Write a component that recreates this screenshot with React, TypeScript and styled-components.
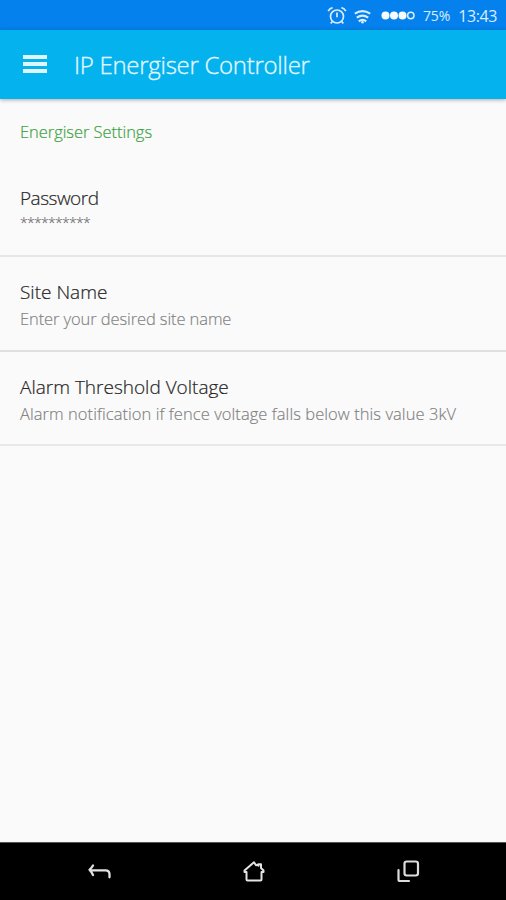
import React from 'react';
import styled, { createGlobalStyle } from 'styled-components';

const GlobalStyle = createGlobalStyle`
  * { box-sizing: border-box; }
  body { margin: 0; background: #fafafa; }
`;

const Screen = styled.div`
  width: 100%;
  height: 900px;
  display: flex;
  flex-direction: column;
  overflow: hidden;
  background: #fafafa;
  font-family: 'Open Sans', 'Noto Sans', sans-serif;
  font-weight: 300;
`;

const StatusBar = styled.header`
  height: 30px;
  flex: none;
  display: flex;
  align-items: center;
  justify-content: flex-end;
  padding: 1px 9px 0 0;
  background: #0481ec;
  color: #d9edff;
`;

const StatusIcon = styled.svg<{ $gap: number }>`
  display: block;
  flex: none;
  margin-right: ${(p) => p.$gap}px;
`;

const StatusText = styled.span<{ $size: number; $spacing: number; $gap?: number }>`
  font-size: ${(p) => p.$size}px;
  line-height: 28px;
  font-weight: 400;
  letter-spacing: ${(p) => p.$spacing}px;
  margin-right: ${(p) => p.$gap ?? 0}px;
  white-space: nowrap;
`;

const AppBar = styled.div`
  height: 69px;
  flex: none;
  display: flex;
  align-items: center;
  padding-left: 23px;
  background: #04b2ee;
  box-shadow: 0 1px 4px rgba(0, 0, 0, 0.32);
`;

const MenuButton = styled.button`
  width: 24px;
  height: 18px;
  margin-top: -1px;
  padding: 0;
  border: 0;
  background: none;
  display: flex;
  flex-direction: column;
  justify-content: space-between;
`;

const MenuLine = styled.span`
  display: block;
  width: 24px;
  height: 4px;
  background: #dff6ff;
`;

const AppTitle = styled.h1`
  margin: 0 0 0 27px;
  font-size: 24px;
  line-height: 34px;
  font-weight: 300;
  letter-spacing: -0.28px;
  color: #e6f8ff;
  -webkit-text-stroke: 0.3px currentColor;
  white-space: nowrap;
`;

const Settings = styled.main`
  flex: 1;
  display: flex;
  flex-direction: column;
`;

const SectionTitle = styled.h2`
  margin: 0;
  height: 64px;
  padding: 21px 0 0 20px;
  font-size: 16.5px;
  line-height: 24px;
  font-weight: 300;
  letter-spacing: -0.05px;
  color: #3ea244;
  -webkit-text-stroke: 0.2px currentColor;
`;

const Item = styled.section<{ $height: number; $rule: string }>`
  height: ${(p) => p.$height}px;
  padding: 21px 0 0 20px;
  border-bottom: 2px solid ${(p) => p.$rule};
  white-space: nowrap;
`;

const ItemTitle = styled.div<{ $spacing: number }>`
  font-size: 19px;
  line-height: 28px;
  letter-spacing: ${(p) => p.$spacing}px;
  color: #262626;
  -webkit-text-stroke: 0.2px currentColor;
`;

const ItemSummary = styled.div<{ $spacing: number }>`
  font-size: 16.5px;
  line-height: 25px;
  letter-spacing: ${(p) => p.$spacing}px;
  color: #808080;
  -webkit-text-stroke: 0.15px currentColor;
`;

const MaskedSummary = styled(ItemSummary)`
  font-size: 14px;
  line-height: 22px;
  color: #6a6a6a;
`;

const NavBar = styled.nav`
  height: 58px;
  flex: none;
  display: grid;
  grid-template-columns: 154px 154px 154px;
  justify-content: center;
  align-items: center;
  padding: 0 0 2px 2px;
  border-top: 1px solid #555;
  background: #000;
`;

const NavButton = styled.button`
  display: flex;
  justify-content: center;
  padding: 0;
  border: 0;
  background: none;
`;

const items = [
  { title: 'Password', summary: '**********', masked: true, height: 94, ts: -0.5, ss: -0.7, rule: '#e6e6e6' },
  { title: 'Site Name', summary: 'Enter your desired site name', masked: false, height: 95, ts: 0, ss: -0.1, rule: '#dfdfdf' },
  {
    title: 'Alarm Threshold Voltage',
    summary: 'Alarm notification if fence voltage falls below this value 3kV',
    masked: false, height: 94, ts: 0, ss: 0.06, rule: '#e8e8e8',
  },
];

export default function App() {
  return (
    <Screen>
      <GlobalStyle />
      <StatusBar>
        <StatusIcon $gap={7} width="20" height="20" viewBox="0 0 20 20" fill="none" stroke="currentColor" strokeWidth="1.7">
          <circle cx="10" cy="10.500" r="6.500" />
          <path d="M10 6.500v4.800M1.200 5.200Q2.500 2.300 5.600 1.600M18.800 5.200Q17.500 2.300 14.400 1.600M5.300 15.500l-1.600 2M14.700 15.500l1.600 2" />
        </StatusIcon>
        <StatusIcon $gap={10} width="17" height="16" viewBox="0 0 17 16" fill="none" stroke="currentColor" strokeWidth="2.2">
          <path d="M.8 5.600Q8.500 .8 16.200 5.600M2.800 9.600Q8.500 5.600 14.200 9.600M4.800 13.400Q8.500 10.300 12.200 13.400" />
          <circle cx="8.500" cy="14.200" r="1.300" fill="currentColor" stroke="none" />
        </StatusIcon>
        <StatusIcon $gap={8} width="34" height="10" viewBox="0 0 34 10" fill="#f5fbff">
          <circle cx="4.500" cy="4.500" r="4" />
          <circle cx="13" cy="4.500" r="4" />
          <circle cx="21.500" cy="4.500" r="4" />
          <circle cx="29.800" cy="4.500" r="3.200" fill="none" stroke="#d9edff" strokeWidth="1.500" />
        </StatusIcon>
        <StatusText $size={14} $spacing={-0.1} $gap={8}>75%</StatusText>
        <StatusText $size={16} $spacing={-0.4}>13:43</StatusText>
      </StatusBar>
      <AppBar>
        <MenuButton aria-label="Menu">
          <MenuLine />
          <MenuLine />
          <MenuLine />
        </MenuButton>
        <AppTitle>IP Energiser Controller</AppTitle>
      </AppBar>
      <Settings>
        <SectionTitle>Energiser Settings</SectionTitle>
        {items.map((item) => {
          const Summary = item.masked ? MaskedSummary : ItemSummary;
          return (
            <Item key={item.title} $height={item.height} $rule={item.rule}>
              <ItemTitle $spacing={item.ts}>{item.title}</ItemTitle>
              <Summary $spacing={item.ss}>{item.summary}</Summary>
            </Item>
          );
        })}
      </Settings>
      <NavBar>
        <NavButton aria-label="Back">
          <svg width="26" height="20" viewBox="0 0 26 20" fill="none" stroke="#e4e0e2" strokeWidth="2.3" strokeLinecap="round" strokeLinejoin="round">
            <path d="M6 4.500Q4.500 7 2.500 8.800Q4.500 11 6 14M3 9.300h15.500q4 0 4 4v3" />
          </svg>
        </NavButton>
        <NavButton aria-label="Home">
          <svg width="24" height="22" viewBox="0 0 24 22" fill="none" stroke="#e4e4e4" strokeWidth="2" strokeLinejoin="round">
            <path d="M4.500 12v7.500q0 1 1 1h13q1 0 1-1V12h2v-1.500L19 8V4.300h-2.500v1.500l-1-1-1.500 .5L12 2.300 2.500 10.500V12z" />
          </svg>
        </NavButton>
        <NavButton aria-label="Recent apps">
          <svg width="24" height="24" viewBox="0 0 24 24" fill="none" stroke="#dcdcdc" strokeWidth="2.2" strokeLinecap="round">
            <rect x="8.500" y="2.500" width="13.500" height="14" rx="2.200" />
            <path d="M2.500 11v9.500q0 1.500 1.500 1.500h9" />
          </svg>
        </NavButton>
      </NavBar>
    </Screen>
  );
}
